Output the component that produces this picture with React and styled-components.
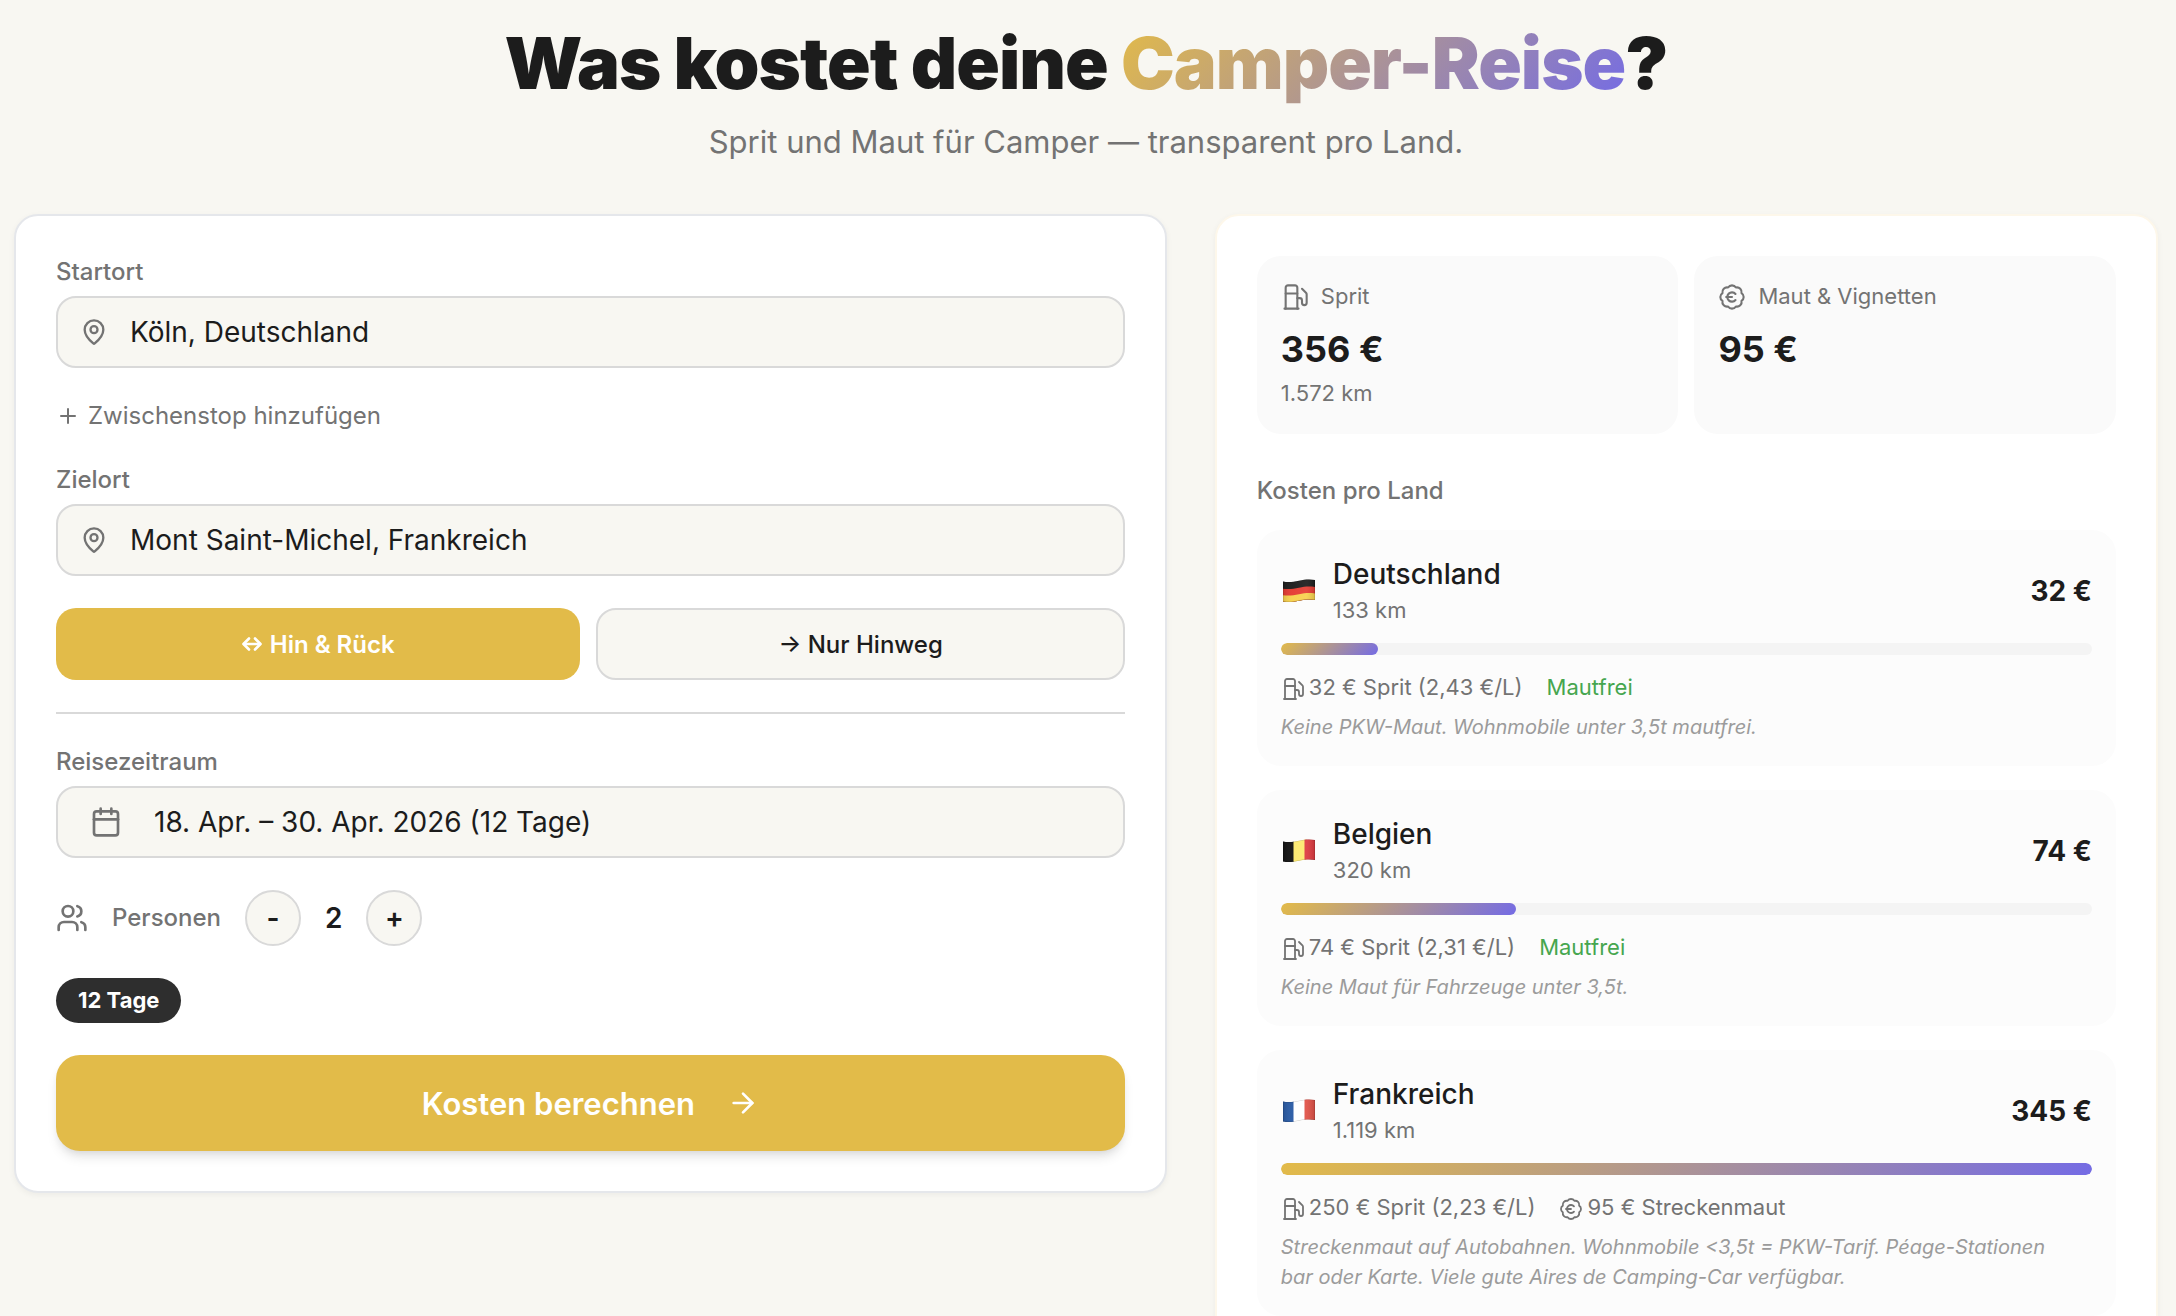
import React, { useState } from 'react';
import styled, { createGlobalStyle, css } from 'styled-components';
import { ArrowRight, BadgeEuro, Calendar, MapPin, Plus, Users } from 'lucide-react';

const GlobalStyle = createGlobalStyle`
  *, *::before, *::after {
    box-sizing: border-box;
  }

  body {
    margin: 0;
    background: #f8f7f2;
    color: #1c1c1c;
    font-family: Inter, sans-serif;
    -webkit-font-smoothing: antialiased;
  }

  h1, h2, p, ul {
    margin: 0;
    padding: 0;
  }

  button, input {
    font-family: inherit;
    color: inherit;
  }

  button {
    cursor: pointer;
  }
`;

const Page = styled.main`
  min-height: 100vh;
  padding: 20px 18px 48px 14px;
`;

const Header = styled.header`
  text-align: center;
  margin-bottom: 48px;
`;

const Title = styled.h1`
  font-size: 72px;
  line-height: 86px;
  font-weight: 900;
  letter-spacing: -1px;
  margin-bottom: 12px;
`;

const Highlight = styled.span`
  background: linear-gradient(135deg, #e3bb48, #746be5);
  -webkit-background-clip: text;
  background-clip: text;
  color: transparent;
`;

const Subtitle = styled.p`
  font-size: 31px;
  line-height: 48px;
  color: #737373;
`;

const Columns = styled.div`
  display: grid;
  grid-template-columns: 11fr 9fr;
  gap: 48px;
  align-items: start;

  @media(max-width: 1100px) {
    grid-template-columns: 1fr;
  }
`;

const Card = styled.div`
  min-width: 0;
  padding: 40px;
  background: #fff;
  border: 2px solid #e5e7eb;
  border-radius: 24px;
  box-shadow: 0 2px 6px rgba(0, 0, 0, 0.05);
`;

const FormCard = styled(Card).attrs({ as: 'form' })`
  display: flex;
  flex-direction: column;
  gap: 32px;
`;

const ResultCard = styled(Card).attrs({ as: 'section' })`
  border-color: #fdf7ea;
`;

const Field = styled.div`
  display: flex;
  flex-direction: column;
  gap: 8px;
`;

const Label = styled.label`
  font-size: 24px;
  line-height: 32px;
  font-weight: 500;
  color: #737373;
`;

const inputBox = css`
  width: 100%;
  height: 72px;
  background: #f8f7f2;
  border: 2px solid #d9d9d9;
  border-radius: 20px;
  font-size: 28px;
`;

const InputWrap = styled.div`
  position: relative;

  svg {
    position: absolute;
    left: 24px;
    top: 22px;
    color: #737373;
  }
`;

const TextInput = styled.input`
  ${inputBox}
  padding: 0 24px 0 72px;
`;

const DateButton = styled.button`
  ${inputBox}
  display: flex;
  align-items: center;
  gap: 32px;
  padding: 0 32px;
  text-align: left;

  svg {
    color: #737373;
  }
`;

const AddStop = styled.button`
  display: flex;
  align-items: center;
  align-self: flex-start;
  gap: 8px;
  padding: 0;
  border: 0;
  background: none;
  font-size: 24px;
  line-height: 32px;
  color: #737373;
`;

const Toggle = styled.div`
  display: flex;
  gap: 16px;
`;

const ToggleButton = styled.button`
  display: flex;
  flex: 1;
  align-items: center;
  justify-content: center;
  gap: 8px;
  height: 72px;
  padding: 0 24px;
  font-size: 24px;
  font-weight: ${({ $active }) => ($active ? 600 : 500)};
  border-radius: 20px;
  border: ${({ $active }) => ($active ? '0' : '2px solid #d9d9d9')};
  background: ${({ $active }) => ($active ? '#e2bb49' : '#f8f7f2')};
  color: ${({ $active }) => ($active ? '#fff' : 'inherit')};
`;

const Divider = styled.hr`
  width: 100%;
  height: 2px;
  margin: 0;
  border: 0;
  background: #d9d9d9;
`;

const PersonsRow = styled.div`
  display: flex;
  align-items: center;
  gap: 24px;
  color: #737373;
`;

const RoundButton = styled.button`
  width: 56px;
  height: 56px;
  padding: 0;
  border-radius: 50%;
  border: 2px solid #d9d9d9;
  background: #f8f7f2;
  font-size: 28px;
  font-weight: 600;
  color: #1c1c1c;
`;

const Count = styled.output`
  font-size: 28px;
  font-weight: 600;
  color: #1c1c1c;
`;

const DaysBadge = styled.span`
  align-self: flex-start;
  padding: 6px 22px;
  border-radius: 24px;
  background: #2e2e2e;
  color: #fff;
  font-size: 22px;
  line-height: 33px;
  font-weight: 700;
`;

const SubmitButton = styled.button`
  display: flex;
  align-items: center;
  justify-content: center;
  gap: 32px;
  height: 96px;
  border: 0;
  border-radius: 24px;
  background: #e2bb49;
  color: #fff;
  font-size: 31px;
  font-weight: 600;
  box-shadow: 0 8px 12px -2px rgba(0, 0, 0, 0.1), 0 4px 8px -4px rgba(0, 0, 0, 0.1);
`;

const Stats = styled.div`
  display: grid;
  grid-template-columns: 1fr 1fr;
  gap: 16px;
`;

const Stat = styled.div`
  padding: 24px;
  border-radius: 24px;
  background: #fafafa;
`;

const StatLabel = styled.div`
  display: flex;
  align-items: center;
  gap: 12px;
  margin-bottom: 8px;
  font-size: 22px;
  line-height: 33px;
  color: #737373;
`;

const StatValue = styled.div`
  font-size: 36px;
  line-height: 56px;
  font-weight: 700;
`;

const SmallText = styled.div`
  font-size: 22px;
  line-height: 33px;
  color: #737373;
`;

const SectionTitle = styled.h2`
  margin: 40px 0 22px;
  font-size: 24px;
  line-height: 34px;
  font-weight: 500;
  color: #737373;
`;

const CountryList = styled.ul`
  display: flex;
  flex-direction: column;
  gap: 24px;
  list-style: none;
`;

const CountryItem = styled.li`
  padding: 24px;
  border-radius: 24px;
  background: #fcfcfc;
`;

const CountryHead = styled.div`
  display: flex;
  align-items: center;
  gap: 16px;
  margin-bottom: 16px;
`;

const CountryName = styled.div`
  font-size: 28px;
  line-height: 40px;
  font-weight: 500;
`;

const CountryTotal = styled.div`
  margin-left: auto;
  font-size: 28px;
  font-weight: 700;
`;

const Track = styled.div`
  height: 12px;
  margin-bottom: 16px;
  border-radius: 6px;
  background: #f4f4f4;
  overflow: hidden;
`;

const Bar = styled.div`
  height: 100%;
  border-radius: 6px;
  background: linear-gradient(135deg, #e3bb48, #746be5);
`;

const Meta = styled(SmallText)`
  display: flex;
  flex-wrap: wrap;
  gap: 0 24px;
  margin-bottom: 8px;

  svg {
    margin-right: 4px;
    vertical-align: middle;
  }
`;

const TollFree = styled.span`
  color: #46a64f;
`;

const Note = styled.p`
  padding-right: 12px;
  font-size: 20px;
  line-height: 30px;
  font-style: italic;
  color: #9b9b9b;
`;

function FuelIcon({ size }) {
  return (
    <svg
      width={size}
      height={size}
      viewBox="0 0 24 24"
      fill="none"
      stroke="currentColor"
      strokeWidth="1.8"
      strokeLinecap="round"
      strokeLinejoin="round"
      aria-hidden="true"
    >
      <path d="M3 22h12" />
      <path d="M4 9h10" />
      <path d="M14 22V4a2 2 0 0 0-2-2H6a2 2 0 0 0-2 2v18" />
      <path d="M14 13h2a2 2 0 0 1 2 2v2a2 2 0 0 0 4 0V9.83a2 2 0 0 0-.59-1.42L18 5" />
    </svg>
  );
}

function RoundTripIcon() {
  return (
    <svg
      width="20"
      height="16"
      viewBox="0 0 20 16"
      fill="none"
      stroke="currentColor"
      strokeWidth="2.6"
      strokeLinecap="round"
      strokeLinejoin="round"
      aria-hidden="true"
    >
      <path d="M2 8h16" />
      <path d="M7 2.500 1.500 8 7 13.500" />
      <path d="M13 2.500 18.500 8 13 13.500" />
    </svg>
  );
}

function Flag({ code, colors, horizontal }) {
  const clipId = `flag-${code}`;
  return (
    <svg width="36" height="24" viewBox="0 0 36 24" aria-hidden="true">
      <defs>
        <clipPath id={clipId}>
          <path d="M2 2.500C7 3.500 12 3.100 18 1.700S29 0 34 1V21c-5-1-10-.7-16 .7S7 23.500 2 22.500Z" />
        </clipPath>
        <linearGradient id={`${clipId}-shade`}>
          <stop offset="0" stopColor="#000" stopOpacity="0.16" />
          <stop offset="0.3" stopColor="#fff" stopOpacity="0.06" />
          <stop offset="0.7" stopColor="#fff" stopOpacity="0.1" />
          <stop offset="1" stopColor="#000" stopOpacity="0.18" />
        </linearGradient>
      </defs>
      <g clipPath={`url(#${clipId})`}>
        {horizontal ? (
          <>
            <rect width="36" height="24" fill={colors[0]} />
            <path d="M0 9.500C7 10.500 12 10 18 8.700S29 7 36 8.200V24H0Z" fill={colors[1]} />
            <path d="M0 16C7 17 12 16.500 18 15.200S29 13.500 36 14.700V24H0Z" fill={colors[2]} />
          </>
        ) : (
          colors.map((color, i) => (
            <rect key={color} x={[0, 12.5, 23.5][i]} width="13" height="24" fill={color} />
          ))
        )}
        <rect width="36" height="24" fill={`url(#${clipId}-shade)`} />
        <path
          d="M2 2.500C7 3.500 12 3.100 18 1.700S29 0 34 1V21c-5-1-10-.7-16 .7S7 23.500 2 22.500Z"
          fill="none"
          stroke="#000"
          strokeOpacity="0.2"
        />
      </g>
    </svg>
  );
}

const countries = [
  {
    code: 'de',
    name: 'Deutschland',
    flag: ['#151515', '#e4352b', '#f7d048'],
    horizontal: true,
    km: '133 km',
    total: '32 €',
    share: 12,
    fuel: '32 € Sprit (2,43 €/L)',
    note: 'Keine PKW-Maut. Wohnmobile unter 3,5t mautfrei.',
  },
  {
    code: 'be',
    name: 'Belgien',
    flag: ['#0c0c0c', '#fde96a', '#dc3238'],
    km: '320 km',
    total: '74 €',
    share: 29,
    fuel: '74 € Sprit (2,31 €/L)',
    note: 'Keine Maut für Fahrzeuge unter 3,5t.',
  },
  {
    code: 'fr',
    name: 'Frankreich',
    flag: ['#2457a3', '#ffffff', '#df4b40'],
    km: '1.119 km',
    total: '345 €',
    share: 100,
    fuel: '250 € Sprit (2,23 €/L)',
    toll: '95 € Streckenmaut',
    note: 'Streckenmaut auf Autobahnen. Wohnmobile <3,5t = PKW-Tarif. Péage-Stationen bar oder Karte. Viele gute Aires de Camping-Car verfügbar.',
  },
];

function LocationField({ id, label, defaultValue }) {
  return (
    <Field>
      <Label htmlFor={id}>{label}</Label>
      <InputWrap>
        <MapPin size={28} strokeWidth={2} />
        <TextInput id={id} type="text" defaultValue={defaultValue} />
      </InputWrap>
    </Field>
  );
}

function TripForm() {
  const [roundTrip, setRoundTrip] = useState(true);
  const [persons, setPersons] = useState(2);

  return (
    <FormCard onSubmit={(e) => e.preventDefault()}>
      <LocationField id="start" label="Startort" defaultValue="Köln, Deutschland" />
      <AddStop type="button">
        <Plus size={24} strokeWidth={2} />
        Zwischenstop hinzufügen
      </AddStop>
      <LocationField id="ziel" label="Zielort" defaultValue="Mont Saint-Michel, Frankreich" />
      <Toggle>
        <ToggleButton type="button" $active={roundTrip} onClick={() => setRoundTrip(true)}>
          <RoundTripIcon />
          Hin &amp; Rück
        </ToggleButton>
        <ToggleButton type="button" $active={!roundTrip} onClick={() => setRoundTrip(false)}>
          → Nur Hinweg
        </ToggleButton>
      </Toggle>
      <Divider />
      <Field>
        <Label htmlFor="zeitraum">Reisezeitraum</Label>
        <DateButton id="zeitraum" type="button">
          <Calendar size={32} strokeWidth={2} />
          18. Apr. – 30. Apr. 2026 (12 Tage)
        </DateButton>
      </Field>
      <PersonsRow>
        <Users size={32} strokeWidth={2} />
        <Label htmlFor="personen">Personen</Label>
        <RoundButton type="button" onClick={() => setPersons(Math.max(1, persons - 1))}>
          -
        </RoundButton>
        <Count id="personen">{persons}</Count>
        <RoundButton type="button" onClick={() => setPersons(persons + 1)}>
          +
        </RoundButton>
      </PersonsRow>
      <DaysBadge>12 Tage</DaysBadge>
      <SubmitButton type="submit">
        Kosten berechnen
        <ArrowRight size={32} strokeWidth={2} />
      </SubmitButton>
    </FormCard>
  );
}

function Country({ country }) {
  return (
    <CountryItem>
      <CountryHead>
        <Flag code={country.code} colors={country.flag} horizontal={country.horizontal} />
        <div>
          <CountryName>{country.name}</CountryName>
          <SmallText>{country.km}</SmallText>
        </div>
        <CountryTotal>{country.total}</CountryTotal>
      </CountryHead>
      <Track>
        <Bar style={{ width: `${country.share}%` }} />
      </Track>
      <Meta>
        <span>
          <FuelIcon size={24} />
          {country.fuel}
        </span>
        {country.toll ? (
          <span>
            <BadgeEuro size={24} strokeWidth={1.8} />
            {country.toll}
          </span>
        ) : (
          <TollFree>Mautfrei</TollFree>
        )}
      </Meta>
      <Note>{country.note}</Note>
    </CountryItem>
  );
}

function App() {
  return (
    <Page>
      <GlobalStyle />
      <Header>
        <Title>
          Was kostet deine <Highlight>Camper-Reise</Highlight>?
        </Title>
        <Subtitle>Sprit und Maut für Camper — transparent pro Land.</Subtitle>
      </Header>
      <Columns>
        <TripForm />
        <ResultCard>
          <Stats>
            <Stat>
              <StatLabel>
                <FuelIcon size={28} />
                Sprit
              </StatLabel>
              <StatValue>356 €</StatValue>
              <SmallText>1.572 km</SmallText>
            </Stat>
            <Stat>
              <StatLabel>
                <BadgeEuro size={28} strokeWidth={1.8} />
                Maut &amp; Vignetten
              </StatLabel>
              <StatValue>95 €</StatValue>
            </Stat>
          </Stats>
          <SectionTitle>Kosten pro Land</SectionTitle>
          <CountryList>
            {countries.map((country) => (
              <Country key={country.code} country={country} />
            ))}
          </CountryList>
        </ResultCard>
      </Columns>
    </Page>
  );
}

export default App;
